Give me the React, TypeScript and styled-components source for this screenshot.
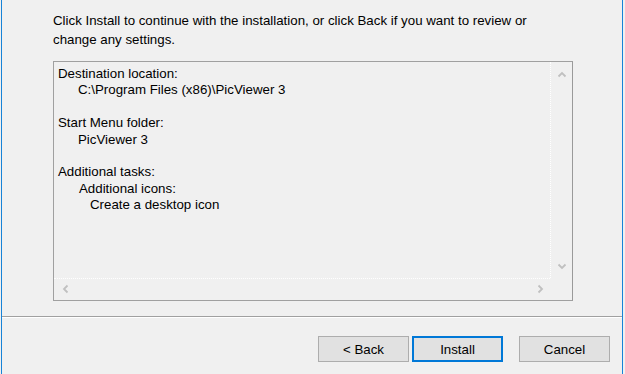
import styled, { createGlobalStyle } from 'styled-components'

const GlobalStyle = createGlobalStyle`
  html, body {
    margin: 0;
    padding: 0;
    background: #f0f0f0;
  }
  body {
    font-family: "Liberation Sans", Arial, sans-serif;
    font-size: 13.3px;
    color: #000;
  }
`

type Line = { text: string; indent?: number }

const summary: Line[] = [
  { text: 'Destination location:' },
  { text: 'C:\\Program Files (x86)\\PicViewer 3', indent: 20 },
  { text: '' },
  { text: 'Start Menu folder:' },
  { text: 'PicViewer 3', indent: 20 },
  { text: '' },
  { text: 'Additional tasks:' },
  { text: 'Additional icons:', indent: 21 },
  { text: 'Create a desktop icon', indent: 32 }
]

const Chevron = ({ dir }: { dir: 'up' | 'down' | 'left' | 'right' }) => {
  const rot = { up: 0, right: 90, down: 180, left: 270 }[dir]
  return (
    <svg width="10" height="10" viewBox="0 0 10 10">
      <path
        d="M1.5 6.5 L5 3 L8.5 6.5"
        fill="none"
        stroke="#c0c0c0"
        strokeWidth="1.8"
        transform={`rotate(${rot} 5 5)`}
      />
    </svg>
  )
}

const App = () => {
  return (
    <Window>
      <GlobalStyle />
      <Body>
        <Intro>
          Click Install to continue with the installation, or click Back if you want to review or
          <br />
          change any settings.
        </Intro>
        <Memo>
          <MemoMain>
            <MemoText>
              {summary.map((l, i) => (
                <MemoLine key={`line_${i}`} indent={l.indent || 0}>
                  {l.text || '\u00a0'}
                </MemoLine>
              ))}
            </MemoText>
            <VScroll>
              <ArrowCell>
                <Chevron dir="up" />
              </ArrowCell>
              <ArrowCell>
                <Chevron dir="down" />
              </ArrowCell>
            </VScroll>
          </MemoMain>
          <HScrollRow>
            <HScroll>
              <ArrowCell>
                <Chevron dir="left" />
              </ArrowCell>
              <ArrowCell>
                <Chevron dir="right" />
              </ArrowCell>
            </HScroll>
            <Corner />
          </HScrollRow>
        </Memo>
      </Body>
      <Separator />
      <Footer>
        <Button>&lt; Back</Button>
        <Button isDefault>Install</Button>
        <Button spaced>Cancel</Button>
      </Footer>
    </Window>
  )
}

export default App

const Window = styled.div`
  box-sizing: border-box;
  margin-left: 1px;
  width: 622px;
  height: 374px;
  border-left: 1px solid #1883d7;
  border-right: 1px solid #1883d7;
  background: #f0f0f0;
  display: flex;
  flex-direction: column;
`
const Body = styled.div`
  padding: 11px 0 0 51px;
  display: flex;
  flex-direction: column;
`
const Intro = styled.div`
  line-height: 19px;
  white-space: nowrap;
`
const Memo = styled.div`
  box-sizing: border-box;
  margin-top: 12px;
  width: 520px;
  height: 240px;
  border: 1px solid #a0a0a0;
  border-right-color: #9a9a9a;
  display: flex;
  flex-direction: column;
`
const MemoMain = styled.div`
  flex: 1;
  display: flex;
  min-height: 0;
`
const MemoText = styled.div`
  flex: 1;
  padding: 4px 0 0 4px;
  line-height: 16.4px;
`
const MemoLine = styled.div<{ indent: number }>`
  padding-left: ${(p) => p.indent}px;
  white-space: nowrap;
`
const VScroll = styled.div`
  width: 21px;
  border-left: 1px dotted #ffffff;
  display: flex;
  flex-direction: column;
  justify-content: space-between;
  align-items: center;
  padding: 7px 0 6px;
`
const HScrollRow = styled.div`
  display: flex;
  height: 22px;
`
const HScroll = styled.div`
  flex: 1;
  border-top: 1px dotted #ffffff;
  display: flex;
  justify-content: space-between;
  align-items: center;
  padding: 0 4px 1px 6px;
`
const Corner = styled.div`
  width: 22px;
`
const ArrowCell = styled.div`
  width: 12px;
  height: 12px;
  display: flex;
  align-items: center;
  justify-content: center;
`
const Separator = styled.div`
  margin-top: 15px;
  height: 1px;
  background: #a0a0a0;
  border-bottom: 1px solid #ffffff;
`
const Footer = styled.div`
  display: flex;
  justify-content: flex-end;
  gap: 3px;
  padding: 18px 12px 0 0;
`
const Button = styled.button<{ isDefault?: boolean; spaced?: boolean }>`
  box-sizing: border-box;
  width: 91px;
  height: 26px;
  margin-left: ${(p) => (p.spaced ? '13px' : '0')};
  background: #e1e1e1;
  border: ${(p) => (p.isDefault ? '2px solid #0078d7' : '1px solid #adadad')};
  font-family: "Liberation Sans", Arial, sans-serif;
  font-size: 13.3px;
  color: #000;
  padding: 0;
`
